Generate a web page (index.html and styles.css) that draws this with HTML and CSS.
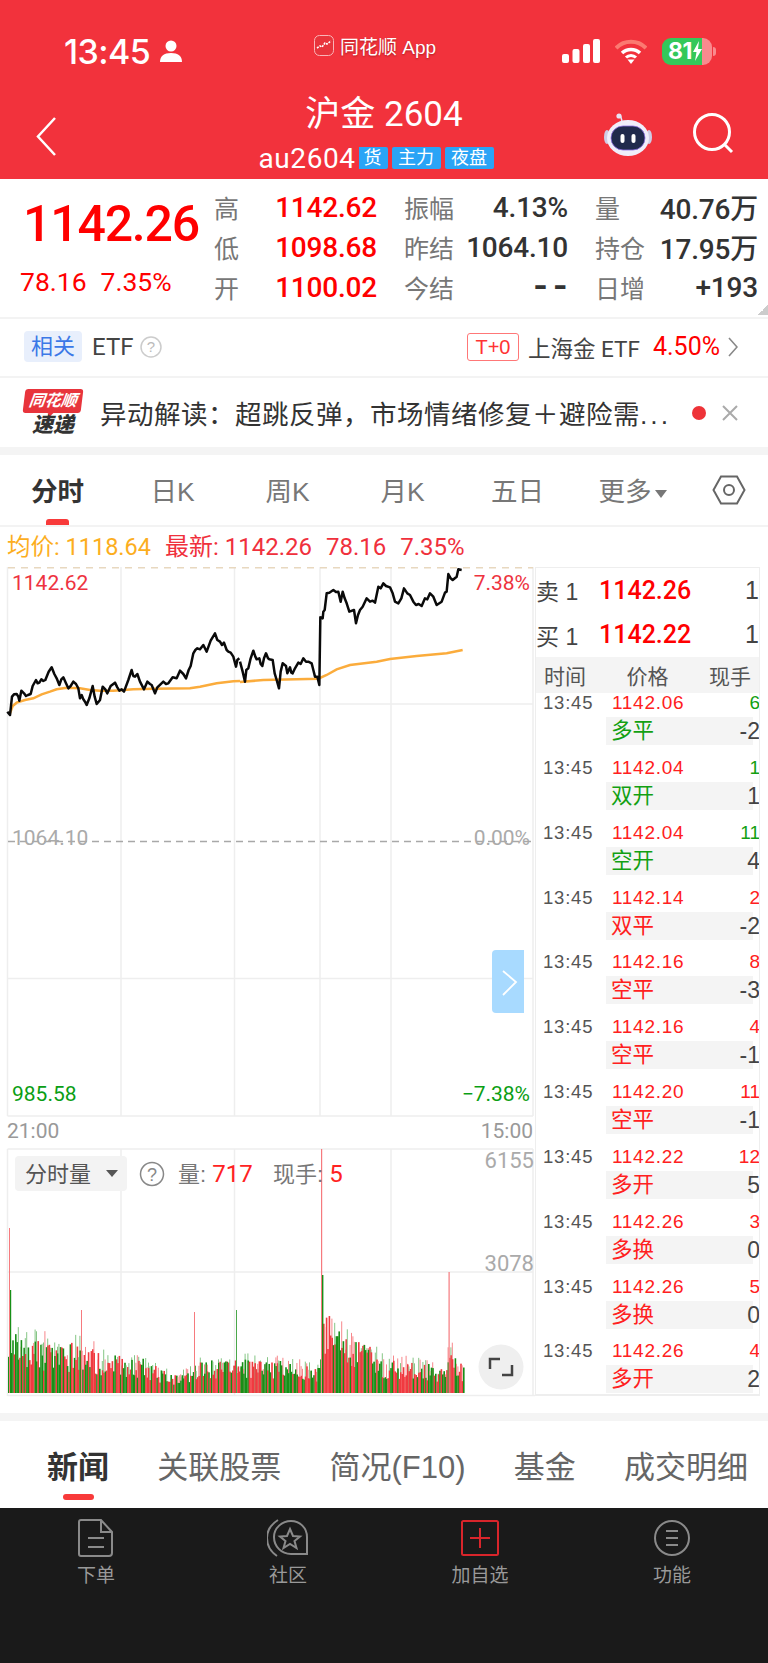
FILE: index.html
```html
<!DOCTYPE html>
<html lang="zh-CN">
<head>
    <meta charset="UTF-8">
    <meta name="viewport" content="width=device-width, initial-scale=1.0">
    <title>沪金 2604</title>
    <link rel="stylesheet" href="styles.css">
</head>
<body>
<div class="page">
    <!-- Red header -->
    <header class="header">
        <div class="status-bar">
            <div class="status-left">
                <span class="clock">13:45</span>
                <svg class="person" width="22" height="22" viewBox="0 0 22 22"><circle cx="11" cy="6" r="5.5" fill="#fff"/><path d="M0 22c0-6 4-9 11-9s11 3 11 9z" fill="#fff"/></svg>
            </div>
            <div class="status-center">
                <svg width="20" height="21" viewBox="0 0 20 21"><rect x=".5" y=".5" width="19" height="20" rx="5" fill="#e8343c" stroke="#f9b5b8"/><path d="M3 13l3-2 2 1 3-4 2 1 4-3" fill="none" stroke="#fff" stroke-width="1.6" stroke-dasharray="2 1"/></svg>
                <span>同花顺 App</span>
            </div>
            <div class="status-right">
                <svg width="38" height="24" viewBox="0 0 38 24"><rect y="15" width="7" height="9" rx="2" fill="#fff"/><rect x="10.500" y="10" width="7" height="14" rx="2" fill="#fff"/><rect x="21" y="5" width="7" height="19" rx="2" fill="#fff"/><rect x="31" width="7" height="24" rx="2" fill="#fff"/></svg>
                <svg class="wifi" width="32" height="25" viewBox="0 0 32 25"><path d="M1 9a21 21 0 0 1 30 0" fill="none" stroke="#f98" stroke-opacity=".7" stroke-width="4"/><path d="M7 14a13 13 0 0 1 18 0" fill="none" stroke="#fff" stroke-width="3.500"/><path d="M11 18.500a7 7 0 0 1 10 0" fill="none" stroke="#fff" stroke-width="3"/><path d="M12.500 20.500h7L16 25z" fill="#fff"/></svg>
                <div class="battery"><span class="battery-num">81</span><svg width="9" height="20" viewBox="0 0 9 20"><path d="M6 0L0 11h3.500L2 20l7-12H5z" fill="#fff"/></svg></div>
                <span class="battery-nub"></span>
            </div>
        </div>
        <div class="title-bar">
            <svg class="back" width="21" height="39" viewBox="0 0 21 39"><path d="M19 1L2 19.500 19 38" fill="none" stroke="#fff" stroke-width="2.500"/></svg>
            <div class="title-mid">
                <div class="title">沪金 2604</div>
                <div class="sub-title">
                    <span class="code">au2604</span>
                    <span class="tag tag-cut">货</span>
                    <span class="tag">主力</span>
                    <span class="tag">夜盘</span>
                </div>
            </div>
            <div class="title-icons">
                <svg width="48" height="43" viewBox="0 0 48 43"><path d="M18 8c-1-3-1-6-3-6" fill="none" stroke="#e8e4f4" stroke-width="1.500"/><circle cx="15" cy="3" r="2.600" fill="#e8e4f4"/><ellipse cx="3" cy="24" rx="3" ry="7" fill="#cfcce6"/><ellipse cx="45" cy="24" rx="3" ry="7" fill="#cfcce6"/><ellipse cx="24" cy="25" rx="21" ry="18" fill="#f0eefa"/><rect x="7" y="13" width="34" height="24" rx="12" fill="#202a4c" stroke="#8c6fe0" stroke-width=".8"/><rect x="16.500" y="21" width="4" height="9" rx="2" fill="#fff"/><rect x="27.500" y="21" width="4" height="9" rx="2" fill="#fff"/></svg>
                <svg width="42" height="42" viewBox="0 0 42 42"><circle cx="19" cy="19" r="17.500" fill="none" stroke="#fff" stroke-width="3"/><path d="M31 31l8 8" stroke="#fff" stroke-width="3"/></svg>
            </div>
        </div>
    </header>

    <!-- Quote -->
    <section class="quote">
        <div class="quote-main">
            <div class="quote-price">1142.26</div>
            <div class="quote-change"><span>78.16</span><span>7.35%</span></div>
        </div>
        <div class="quote-grid">
            <div class="q-item"><label>高</label><b class="up">1142.62</b></div>
            <div class="q-item"><label>振幅</label><b>4.13%</b></div>
            <div class="q-item"><label>量</label><b>40.76万</b></div>
            <div class="q-item"><label>低</label><b class="up">1098.68</b></div>
            <div class="q-item"><label>昨结</label><b>1064.10</b></div>
            <div class="q-item"><label>持仓</label><b>17.95万</b></div>
            <div class="q-item"><label>开</label><b class="up">1100.02</b></div>
            <div class="q-item"><label>今结</label><b class="empty">--</b></div>
            <div class="q-item"><label>日增</label><b>+193</b></div>
        </div>
        <span class="corner"></span>
    </section>

    <!-- Related ETF -->
    <section class="related">
        <span class="related-tag">相关</span>
        <span class="related-etf">ETF</span>
        <svg class="help" width="22" height="22" viewBox="0 0 22 22"><circle cx="11" cy="11" r="10" fill="none" stroke="#ccc" stroke-width="1.500"/><text x="11" y="16" text-anchor="middle" class="help-mark">?</text></svg>
        <span class="related-right">
            <span class="t0">T+0</span>
            <span class="related-name">上海金 ETF</span>
            <span class="related-pct">4.50%</span>
            <svg width="10" height="20" viewBox="0 0 10 20"><path d="M1 1l8 9-8 9" fill="none" stroke="#888" stroke-width="1.600"/></svg>
        </span>
    </section>

    <!-- News strip -->
    <section class="news">
        <div class="news-logo">
            <span class="news-flag">同花顺</span>
            <span class="news-sub">速递</span>
        </div>
        <p class="news-text">异动解读：超跳反弹，市场情绪修复＋避险需<span class="more">...</span></p>
        <span class="news-dot"></span>
        <svg width="16" height="16" viewBox="0 0 16 16"><path d="M1 1l14 14M15 1L1 15" stroke="#aaa" stroke-width="2"/></svg>
    </section>

    <!-- Chart period tabs -->
    <nav class="periods">
        <a class="period active">分时</a>
        <a class="period">日K</a>
        <a class="period">周K</a>
        <a class="period">月K</a>
        <a class="period">五日</a>
        <a class="period">更多<i class="caret"></i></a>
        <svg class="hex" width="34" height="30" viewBox="0 0 34 30"><path d="M9 1.500h16L32.500 15 25 28.500H9L1.500 15z" fill="none" stroke="#666" stroke-width="2"/><circle cx="17" cy="15" r="5" fill="none" stroke="#666" stroke-width="2"/></svg>
    </nav>

    <div class="price-line">
        <span class="avg">均价: 1118.64</span>
        <span class="last">最新: 1142.26</span>
        <span class="last">78.16</span>
        <span class="last">7.35%</span>
    </div>

    <!-- Charts and trade list -->
    <div class="market">
        <svg class="charts" width="535" height="830" viewBox="0 567 535 830">
            <g class="grid">
                <path d="M7.500 567V1116M121 567V1116M234.500 567V1116M320 567V1116M391 567V1116M533 567V1116"/>
                <path d="M7.500 704H533M7.500 978.500H533M7.500 1116H533"/>
                <path d="M7.500 1149H533M7.500 1149V1396M121 1149V1396M234.500 1149V1396M391 1149V1396M533 1149V1396M7.500 1272H533M7.500 1395.500H535"/>
            </g>
            <path class="dash-top" d="M8 567.500H533"/>
            <path class="dash-mid" d="M8 841.500H533"/>

            <g id="bars"></g>

            <g transform="translate(0 600) scale(.33333)">
                <polyline class="avg-line" points="30,340 38,318 50,308 75,300 100,295 125,283 150,275 170,268 200,263 240,265 270,270 300,272 340,272 400,268 460,266 570,265 600,260 650,250 700,244 720,243"/>
                <polyline class="price" points="22,335 30,345 36,290 42,283 50,282 55,290 58,302 64,272 72,280 78,288 84,285 92,282 98,258 108,240 113,250 118,248 124,238 130,243 136,240 146,215 155,202 163,222 170,235 178,255 184,238 190,232 198,250 205,265 212,258 220,245 228,252 235,265 240,295 245,285 250,298 255,305 260,315 268,295 278,258 284,290 290,312 296,305 300,300 308,260 316,268 322,280 332,258 345,248 352,262 358,272 365,268 372,275 385,240 395,210 400,228 405,230 412,222 420,245 432,268 442,245 450,252 455,255 465,280 472,262 490,245 498,252 505,250 518,232 530,235 540,212 550,222 558,235 566,210 572,198 580,160 586,150 592,145 600,148 610,135 620,155 632,122 645,100 652,120 660,125 666,135 672,128 680,150 685,155 692,158 700,170 708,200 712,180 718,175"/>
            </g>
            <g transform="translate(230 560) scale(.33333)">
                <polyline class="avg-line" points="30,366 100,360 265,356 290,345 320,328 360,315 440,305 480,297 560,288 650,280 698,270"/>
                <polyline class="price" points="30,305 38,335 45,365 49,330 55,325 62,295 70,272 76,290 80,298 88,295 92,312 97,318 102,295 108,280 114,295 118,298 128,300 134,340 140,360 147,385 152,335 158,310 168,318 172,340 180,322 184,338 188,340 195,325 205,308 212,312 220,295 228,305 235,305 245,310 250,330 255,350 262,350 268,375 271,172 278,175 280,155 284,150 290,100 298,98 310,90 318,96 325,95 332,125 338,95 344,115 350,130 358,155 372,150 378,190 384,165 390,150 398,140 410,115 420,125 428,122 435,128 445,80 452,85 460,70 468,78 480,82 488,100 495,125 505,130 514,115 522,85 532,100 540,105 550,125 558,135 566,132 575,138 585,115 592,118 600,100 610,110 620,135 635,125 645,98 650,95 655,42 662,55 668,60 680,50 685,28 695,30"/>
            </g>

            <text class="lbl up-lbl" x="12" y="590">1142.62</text>
            <text class="lbl up-lbl" x="530" y="590" text-anchor="end">7.38%</text>
            <text class="lbl mid-lbl" x="12" y="845">1064.10</text>
            <text class="lbl mid-lbl" x="530" y="845" text-anchor="end">0.00%</text>
            <text class="lbl down-lbl" x="12" y="1101">985.58</text>
            <text class="lbl down-lbl" x="530" y="1101" text-anchor="end">−7.38%</text>
            <text class="lbl time-lbl" x="7" y="1138">21:00</text>
            <text class="lbl time-lbl" x="533" y="1138" text-anchor="end">15:00</text>

            <path class="next-btn" d="M524 950H496a4 4 0 0 0-4 4V1009a4 4 0 0 0 4 4H524z"/>
            <path class="next-arrow" d="M503 971L516 982 503 995"/>

            <rect class="vol-tag" x="15" y="1156" width="112" height="35" rx="4"/>
            <text class="vol-name" x="25" y="1182">分时量</text>
            <path class="vol-caret" d="M106 1170h12l-6 7z"/>
            <circle class="vol-help" cx="152" cy="1174" r="11.500"/>
            <text class="vol-help-mark" x="152" y="1181" text-anchor="middle">?</text>
            <text class="vol-text" x="178" y="1182">量: <tspan class="vol-num">717</tspan></text>
            <text class="vol-text" x="273" y="1182">现手: <tspan class="vol-num">5</tspan></text>
            <text class="lbl vol-scale" x="534" y="1168" text-anchor="end">6155</text>
            <text class="lbl vol-scale" x="534" y="1271" text-anchor="end">3078</text>

            <circle class="expand-btn" cx="501" cy="1367" r="22.500"/>
            <path class="expand-arrow" d="M490 1369v-10h10M512 1365v10h-10"/>
        </svg>

        <aside class="trades">
            <div class="book"><span class="book-name">卖 1</span><b>1142.26</b><span class="book-qty">1</span></div>
            <div class="book"><span class="book-name">买 1</span><b>1142.22</b><span class="book-qty">1</span></div>
            <div class="trades-head"><span>时间</span><span>价格</span><span>现手</span></div>
            <div class="trade-list">
                <div class="trade"><span class="t-time">13:45</span><span class="t-price">1142.06</span><span class="t-hand green">6</span><div class="t-sub"><span class="green">多平</span><span>-2</span></div></div>
                <div class="trade"><span class="t-time">13:45</span><span class="t-price">1142.04</span><span class="t-hand green">1</span><div class="t-sub"><span class="green">双开</span><span>1</span></div></div>
                <div class="trade"><span class="t-time">13:45</span><span class="t-price">1142.04</span><span class="t-hand green">11</span><div class="t-sub"><span class="green">空开</span><span>4</span></div></div>
                <div class="trade"><span class="t-time">13:45</span><span class="t-price">1142.14</span><span class="t-hand">2</span><div class="t-sub"><span class="red">双平</span><span>-2</span></div></div>
                <div class="trade"><span class="t-time">13:45</span><span class="t-price">1142.16</span><span class="t-hand">8</span><div class="t-sub"><span class="red">空平</span><span>-3</span></div></div>
                <div class="trade"><span class="t-time">13:45</span><span class="t-price">1142.16</span><span class="t-hand">4</span><div class="t-sub"><span class="red">空平</span><span>-1</span></div></div>
                <div class="trade"><span class="t-time">13:45</span><span class="t-price">1142.20</span><span class="t-hand">11</span><div class="t-sub"><span class="red">空平</span><span>-1</span></div></div>
                <div class="trade"><span class="t-time">13:45</span><span class="t-price">1142.22</span><span class="t-hand">12</span><div class="t-sub"><span class="red">多开</span><span>5</span></div></div>
                <div class="trade"><span class="t-time">13:45</span><span class="t-price">1142.26</span><span class="t-hand">3</span><div class="t-sub"><span class="red">多换</span><span>0</span></div></div>
                <div class="trade"><span class="t-time">13:45</span><span class="t-price">1142.26</span><span class="t-hand">5</span><div class="t-sub"><span class="red">多换</span><span>0</span></div></div>
                <div class="trade"><span class="t-time">13:45</span><span class="t-price">1142.26</span><span class="t-hand">4</span><div class="t-sub"><span class="red">多开</span><span>2</span></div></div>
            </div>
        </aside>
    </div>

    <!-- Info tabs -->
    <nav class="info-tabs">
        <a class="info-tab active">新闻</a>
        <a class="info-tab">关联股票</a>
        <a class="info-tab">简况(F10)</a>
        <a class="info-tab">基金</a>
        <a class="info-tab">成交明细</a>
    </nav>

    <!-- Bottom bar -->
    <footer class="toolbar">
        <div class="tool">
            <svg width="36" height="38" viewBox="0 0 36 38"><path d="M3 1h20l11 12v21a3 3 0 0 1-3 3H3a2 2 0 0 1-2-2V3a2 2 0 0 1 2-2zM23 1v12h11M10 19h16M10 28h16" fill="none" stroke="#8a8a8a" stroke-width="2"/></svg>
            <span>下单</span>
        </div>
        <div class="tool">
            <svg width="42" height="38" viewBox="0 0 42 38"><path d="M11 1C3 6 0 12 0 19c0 8 4 14 10 18" fill="none" stroke="#8a8a8a" stroke-width="2"/><path d="M24 2c9 0 16 7 16 16v17H24C14 35 7 27 7 18S15 2 24 2z" fill="none" stroke="#8a8a8a" stroke-width="2"/><path d="M23 10l3 7 7 .5-5.500 4.500 2 7-6.500-4-6.500 4 2-7L13 17.500l7-.5z" fill="none" stroke="#8a8a8a" stroke-width="2"/></svg>
            <span>社区</span>
        </div>
        <div class="tool">
            <svg width="38" height="36" viewBox="0 0 38 36"><rect x="1" y="1" width="36" height="34" rx="1.500" fill="none" stroke="#d9252b" stroke-width="2"/><path d="M19 8v20M9 18h20" stroke="#d9252b" stroke-width="2"/></svg>
            <span>加自选</span>
        </div>
        <div class="tool">
            <svg width="36" height="38" viewBox="0 0 36 38"><circle cx="18" cy="19" r="17" fill="none" stroke="#8a8a8a" stroke-width="2"/><path d="M12 12h12M12 19h12M12 26h12" stroke="#8a8a8a" stroke-width="2"/></svg>
            <span>功能</span>
        </div>
    </footer>
</div>
<script src="chart.js"></script>
</body>
</html>
```
FILE: styles.css
```css
* {
    margin: 0;
    padding: 0;
    box-sizing: border-box;
}

body {
    background-color: #ffffff;
    font-family: "Liberation Sans", "Noto Sans CJK SC", sans-serif;
    color: #333333;
}

.page {
    width: 768px;
    height: 1663px;
    overflow: hidden;
    display: flex;
    flex-direction: column;
}

/* Header */
.header {
    height: 179px;
    flex-shrink: 0;
    background-color: #f2323c;
    color: #ffffff;
}

.status-bar {
    height: 95px;
    padding: 28px 0 0 64px;
    display: flex;
    align-items: flex-start;
}

.status-left {
    width: 250px;
    height: 46px;
    display: flex;
    align-items: center;
    gap: 10px;
}

.clock {
    font-size: 34px;
    font-weight: 500;
    font-family: "Inter", "Liberation Sans", sans-serif;
    letter-spacing: -0.6px;
}

.status-center {
    width: 248px;
    height: 34px;
    display: flex;
    align-items: center;
    gap: 6px;
    font-size: 19px;
    text-shadow: 0 1px 2px rgba(90, 0, 0, 0.45);
}

.status-right {
    height: 46px;
    display: flex;
    align-items: center;
}

.wifi {
    margin-left: 15px;
}

.battery {
    width: 50px;
    height: 27px;
    margin-left: 15px;
    border-radius: 9px;
    background: linear-gradient(to right, #34c85a 80%, #f98a8e 80%);
    display: flex;
    align-items: center;
    padding-left: 6px;
    gap: 1px;
}

.battery-num {
    font-size: 23px;
    font-weight: 700;
    font-family: "Inter", "Liberation Sans", sans-serif;
    letter-spacing: -0.5px;
}

.battery-nub {
    width: 3px;
    height: 9px;
    margin-left: 1px;
    border-radius: 0 3px 3px 0;
    background-color: #f98a8e;
}

.title-bar {
    height: 84px;
    display: grid;
    grid-template-columns: 234px 300px 234px;
}

.back {
    margin: 22px 0 0 36px;
}

.title-mid {
    display: flex;
    flex-direction: column;
    align-items: center;
}

.title {
    height: 40px;
    font-family: "Roboto", "Noto Sans CJK SC", sans-serif;
    font-size: 35px;
    line-height: 40px;
}

.sub-title {
    margin-top: 8px;
    padding-right: 16px;
    height: 30px;
    display: flex;
    align-items: center;
}

.code {
    font-family: "Roboto", sans-serif;
    font-size: 28px;
    letter-spacing: 0.6px;
    width: 100px;
}

.tag {
    width: 49px;
    height: 22px;
    margin-left: 4px;
    background-color: #2aa4f6;
    border-radius: 2px;
    font-size: 18px;
    line-height: 22px;
    text-align: center;
    white-space: nowrap;
}

.tag-cut {
    width: 29px;
    margin-left: 0;
    border-radius: 0 2px 2px 0;
    padding-left: 5px;
    text-align: left;
}

.title-icons {
    display: flex;
    align-items: flex-start;
    gap: 41px;
    padding: 18px 0 0 70px;
}

/* Quote */
.quote {
    position: relative;
    height: 140px;
    flex-shrink: 0;
    display: flex;
    border-bottom: 2px solid #f3f3f3;
}

.quote-main {
    width: 214px;
    padding: 17px 0 0 20px;
    color: #ff0000;
    font-family: "Roboto", sans-serif;
}

.quote-price {
    padding-left: 3px;
    font-size: 50px;
    line-height: 56px;
    font-weight: 500;
    letter-spacing: -1.2px;
}

.quote-change {
    margin-top: 15px;
    font-size: 26.500px;
    line-height: 30px;
    display: flex;
    gap: 14px;
}

.quote-grid {
    display: grid;
    grid-template-columns: 163px 164px 163px;
    grid-auto-rows: 40px;
    column-gap: 27px;
    padding-top: 8px;
}

.q-item {
    display: flex;
    justify-content: space-between;
    align-items: center;
}

.q-item label {
    font-size: 25px;
    color: #777777;
}

.q-item b {
    font-family: "Roboto", "Noto Sans CJK SC", sans-serif;
    font-size: 28px;
    font-weight: 500;
    letter-spacing: -0.2px;
    color: #333333;
    white-space: nowrap;
}

.q-item b.up {
    color: #ff0000;
}

.q-item b.empty {
    font-size: 40px;
    line-height: 40px;
    letter-spacing: 6px;
    margin-right: -5px;
}

.corner {
    position: absolute;
    right: 0;
    bottom: 2px;
    width: 10px;
    height: 10px;
    background: linear-gradient(135deg, transparent 50%, #cccccc 50%);
}

/* Related ETF */
.related {
    height: 59px;
    flex-shrink: 0;
    padding: 12px 30px 14px 24px;
    display: flex;
    align-items: center;
    border-bottom: 2px solid #f3f3f3;
}

.related-tag {
    width: 58px;
    height: 31px;
    background-color: #e8effc;
    border-radius: 4px;
    color: #3b78e7;
    font-size: 22px;
    line-height: 31px;
    text-align: center;
}

.related-etf {
    margin-left: 10px;
    font-family: "Roboto", sans-serif;
    font-size: 24px;
    color: #444444;
}

.help {
    margin-left: 7px;
}

.help-mark {
    font-size: 15px;
    fill: #bbbbbb;
}

.related-right {
    margin-left: auto;
    display: flex;
    align-items: center;
}

.t0 {
    width: 52px;
    height: 28px;
    border: 1px solid #f77;
    border-radius: 3px;
    color: #f33;
    font-size: 20px;
    line-height: 26px;
    text-align: center;
}

.related-name {
    margin-left: 9px;
    font-family: "Roboto", "Noto Sans CJK SC", sans-serif;
    font-size: 22.500px;
    color: #444444;
}

.related-pct {
    margin: 0 8px 0 13px;
    font-family: "Roboto", sans-serif;
    font-size: 25px;
    color: #ff0000;
}

/* News */
.news {
    height: 77px;
    flex-shrink: 0;
    padding-left: 24px;
    display: flex;
    align-items: center;
    border-bottom: 8px solid #f4f4f4;
}

.news-logo {
    width: 58px;
    display: flex;
    flex-direction: column;
    align-items: center;
}

.news-flag {
    position: relative;
    width: 58px;
    height: 24px;
    background-color: #e8343c;
    border-radius: 3px;
    transform: skewX(-7deg);
    color: #ffffff;
    font-size: 16px;
    font-weight: 700;
    font-style: italic;
    line-height: 24px;
    text-align: center;
}

.news-flag::after {
    content: "";
    position: absolute;
    left: 24px;
    top: 23px;
    border: 4px solid transparent;
    border-top-color: #e8343c;
}

.news-sub {
    height: 23px;
    font-size: 21px;
    font-weight: 900;
    font-style: italic;
    line-height: 23px;
    color: #333333;
}

.news-text {
    width: 592px;
    margin-left: 18px;
    font-size: 26.500px;
    letter-spacing: 0.5px;
    color: #333333;
    white-space: nowrap;
    overflow: hidden;
}

.more {
    letter-spacing: 3px;
}

.news-dot {
    width: 14px;
    height: 14px;
    margin-right: 16px;
    border-radius: 50%;
    background-color: #ee3338;
}

/* Period tabs */
.periods {
    height: 72px;
    flex-shrink: 0;
    display: grid;
    grid-template-columns: repeat(6, 115px) 78px;
    align-items: center;
    border-bottom: 2px solid #f3f3f3;
}

.period {
    position: relative;
    height: 70px;
    font-size: 26.500px;
    line-height: 74px;
    text-align: center;
    color: #777777;
}

.period.active {
    font-weight: 700;
    color: #333333;
}

.period.active::after {
    content: "";
    position: absolute;
    left: 46px;
    bottom: 0;
    width: 23px;
    height: 6px;
    border-radius: 3px 3px 0 0;
    background-color: #f83a3a;
}

.caret {
    display: inline-block;
    margin-left: 3px;
    border: 6px solid transparent;
    border-top: 8px solid #777777;
    border-bottom: 0;
    vertical-align: 3px;
}

.hex {
    justify-self: center;
}

.price-line {
    height: 40px;
    flex-shrink: 0;
    padding: 5px 0 0 7px;
    display: flex;
    gap: 14px;
    font-family: "Roboto", "Noto Sans CJK SC", sans-serif;
    font-size: 23.500px;
    line-height: 30px;
    white-space: nowrap;
}

.avg {
    color: #fcae1e;
}

.last {
    font-size: 24px;
    color: #f0303c;
}

/* Charts */
.market {
    height: 830px;
    display: flex;
    flex-shrink: 0;
}

.charts {
    display: block;
    flex-shrink: 0;
}

.grid path {
    fill: none;
    stroke: #eeeeee;
    stroke-width: 1.500;
}

.dash-top {
    stroke: #e8d8bf;
    stroke-width: 2;
    stroke-dasharray: 7 6;
}

.dash-mid {
    stroke: #a8a8a8;
    stroke-width: 1.500;
    stroke-dasharray: 7 5;
}

.price {
    fill: none;
    stroke: #0a0a0a;
    stroke-width: 7.500;
    stroke-linejoin: round;
}

.avg-line {
    fill: none;
    stroke: #fbac3c;
    stroke-width: 7.500;
}

.lbl {
    font-family: "Roboto", sans-serif;
    font-size: 21px;
}

.up-lbl {
    fill: #ee3340;
}

.mid-lbl {
    fill: #aaaaaa;
}

.down-lbl {
    fill: #0a9e14;
}

.time-lbl {
    fill: #999999;
}

.next-btn {
    fill: #a8daff;
}

.next-arrow {
    fill: none;
    stroke: #ffffff;
    stroke-width: 1.800;
}

.vol-tag {
    fill: #f3f3f3;
}

.vol-name {
    font-size: 22px;
    fill: #555555;
}

.vol-caret {
    fill: #555555;
}

.vol-help {
    fill: none;
    stroke: #888888;
    stroke-width: 1.500;
}

.vol-help-mark {
    font-size: 18px;
    fill: #888888;
}

.vol-text {
    font-size: 22px;
    fill: #777777;
}

.vol-num {
    fill: #f22;
    font-family: "Roboto", sans-serif;
    font-size: 24px;
}

.vol-scale {
    font-size: 22px;
    fill: #aaaaaa;
}

.expand-btn {
    fill: #efefef;
}

.expand-arrow {
    fill: none;
    stroke: #444444;
    stroke-width: 2.500;
}

/* Trades */
.trades {
    width: 225px;
    height: 829px;
    border: 1.500px solid #eeeeee;
    border-bottom-width: 2px;
    overflow: hidden;
}

.book {
    height: 45px;
    display: flex;
    align-items: center;
}

.book:first-child {
    height: 44px;
}

.book-name {
    width: 63px;
    font-size: 23px;
    color: #444444;
    white-space: nowrap;
}

.book b {
    font-family: "Roboto", sans-serif;
    font-size: 25px;
    font-weight: 500;
    color: #ff0000;
}

.book-qty {
    margin-left: auto;
    font-size: 25px;
    color: #444444;
}

.trades-head {
    height: 36px;
    padding: 0 8px;
    background-color: #f4f4f4;
    display: flex;
    justify-content: space-between;
    align-items: center;
    font-size: 21px;
    color: #555555;
}

.trade {
    height: 64.850px;
    display: grid;
    grid-template-columns: 70px 1fr auto;
    grid-template-rows: 24px 28px;
    font-size: 18.500px;
    line-height: 20px;
}

.t-time {
    padding-left: 7px;
    color: #555555;
    letter-spacing: 0.8px;
}

.t-price {
    margin-left: 6px;
    font-size: 19px;
    color: #ff2020;
    letter-spacing: 0.7px;
}

.t-hand {
    color: #ff2020;
    font-size: 19px;
}

.t-hand.green,
.green {
    color: #12a012;
}

.red {
    color: #ff2020;
}

.t-sub {
    grid-column: 2 / 4;
    width: 154px;
    height: 28px;
    background: linear-gradient(to right, #f4f4f4 147px, transparent 147px);
    display: flex;
    justify-content: space-between;
    align-items: center;
    padding-left: 5px;
    font-size: 21.500px;
    line-height: 28px;
    color: #444444;
}

.t-sub span:last-child {
    font-size: 23px;
}

/* Info tabs */
.info-tabs {
    margin-top: 16px;
    height: 95px;
    flex-shrink: 0;
    border-top: 8px solid #f4f4f4;
    display: flex;
    align-items: center;
    justify-content: space-between;
    padding: 0 20px 0 47px;
}

.info-tab {
    position: relative;
    font-size: 31px;
    color: #666666;
    white-space: nowrap;
}

.info-tab.active {
    font-weight: 700;
    color: #333333;
}

.info-tab.active::after {
    content: "";
    position: absolute;
    left: 16px;
    bottom: -13px;
    width: 31px;
    height: 6px;
    border-radius: 3px;
    background-color: #f83a3a;
}

/* Toolbar */
.toolbar {
    flex: 1;
    background-color: #1a1a1a;
    display: grid;
    grid-template-columns: repeat(4, 192px);
    padding-top: 11px;
    color: #999999;
    font-size: 19px;
}

.tool {
    display: flex;
    flex-direction: column;
    align-items: center;
    gap: 3px;
}

.tool svg {
    height: 38px;
}
```
FILE: chart.js
```js
// Volume bars for the lower chart. Heights follow an outline of the session,
// with a fixed seed so the picture stays the same on every load.
var outline = [
    [8, 80], [14, 75], [22, 65], [50, 62], [80, 58], [100, 50], [140, 42], [165, 25],
    [180, 22], [200, 38], [240, 40], [280, 38], [318, 30], [322, 110], [332, 85], [345, 72],
    [365, 60], [385, 40], [420, 36], [446, 30], [449, 60], [463, 30]
];

var seed = 20604;
function rand() {
    seed = (seed * 16807) % 2147483647;
    return seed / 2147483647;
}

function outlineAt(x) {
    for (var i = 1; i < outline.length; i++) {
        if (x <= outline[i][0]) {
            var a = outline[i - 1], b = outline[i];
            return a[1] + (b[1] - a[1]) * (x - a[0]) / (b[0] - a[0]);
        }
    }
    return 20;
}

function addBar(parent, x, height, color, opacity, width) {
    var bar = document.createElementNS('http://www.w3.org/2000/svg', 'rect');
    bar.setAttribute('x', x);
    bar.setAttribute('y', 1393 - height);
    bar.setAttribute('width', width);
    bar.setAttribute('height', height);
    bar.setAttribute('fill', color);
    bar.setAttribute('opacity', opacity);
    parent.appendChild(bar);
}

var bars = document.getElementById('bars');

for (var x = 8; x < 463; x += 1.4) {
    var peak = outlineAt(x);
    // faint tall bar behind on some columns, solid one in front on all
    if (rand() > 0.5) {
        addBar(bars, x, peak * (0.6 + rand() * 0.4), rand() > 0.5 ? '#f67a7e' : '#79c079', 0.9, 1);
    }
    addBar(bars, x, peak * (0.35 + rand() * 0.5), rand() > 0.5 ? '#f03a40' : '#178f17', 1, 1.6);
}

// the few bars that stand out
addBar(bars, 9, 165, '#f67a7e', 1, 1);
addBar(bars, 10, 103, '#178f17', 1, 1.2);
addBar(bars, 321, 244, '#f67a7e', 1, 1.2);
addBar(bars, 322, 118, '#178f17', 1, 1.4);
addBar(bars, 448.5, 121, '#f67a7e', 1, 1.2);
addBar(bars, 194, 81, '#f67a7e', 1, 1);
addBar(bars, 236, 83, '#4aa84a', 1, 1);
addBar(bars, 81, 83, '#f67a7e', 1, 1);
```
